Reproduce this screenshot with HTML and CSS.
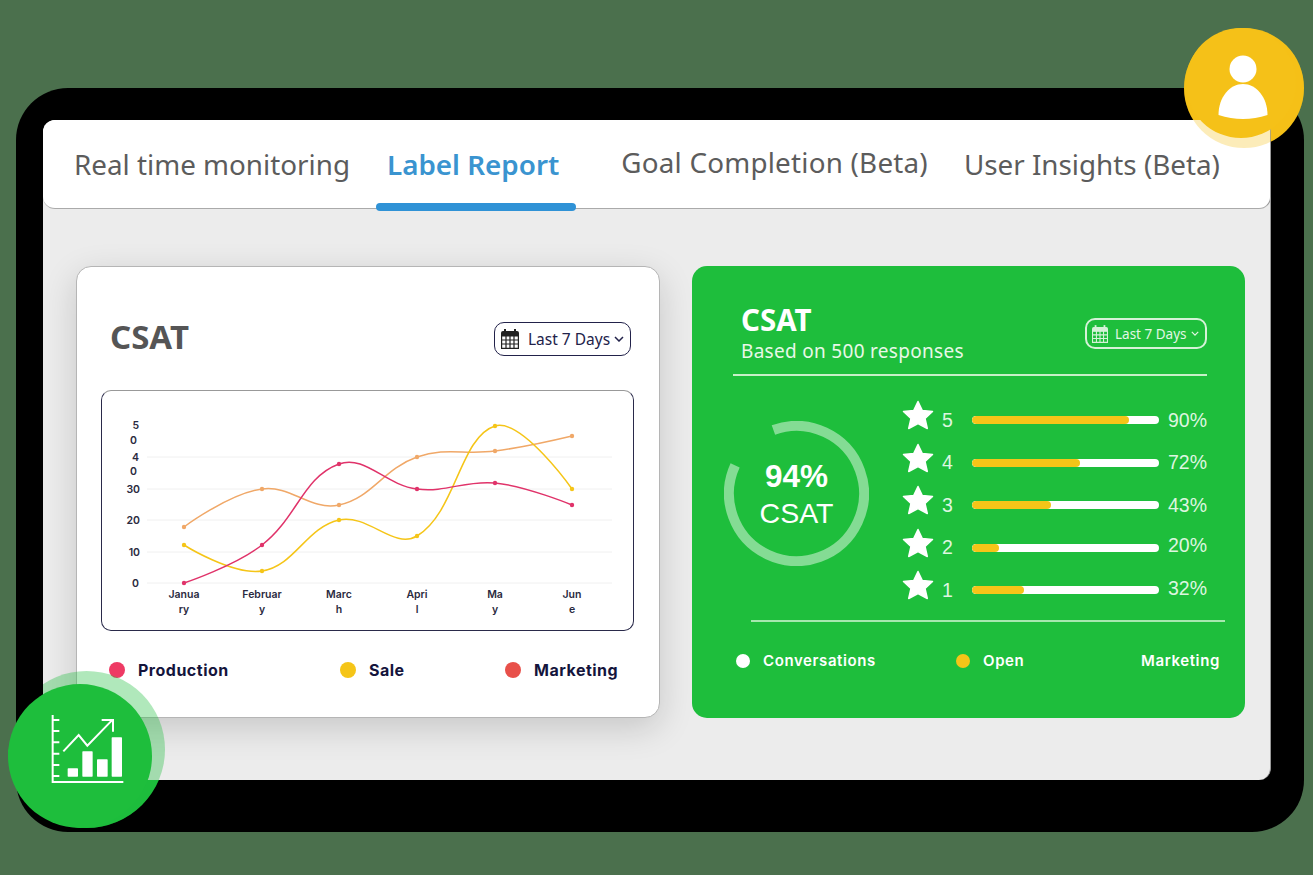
FILE: index.html
```html
<!DOCTYPE html>
<html lang="en">
<head>
    <meta charset="UTF-8">
    <meta name="viewport" content="width=device-width, initial-scale=1.0">
    <title>Label Report</title>
    <link rel="stylesheet" href="styles.css">
</head>
<body>
    <svg class="icon-defs" width="0" height="0">
        <symbol id="calendar" viewBox="0 0 18 20">
            <rect x="3" y="0" width="2" height="4" fill="currentColor"/>
            <rect x="13" y="0" width="2" height="4" fill="currentColor"/>
            <path d="M2 2h14a2 2 0 0 1 2 2v3H0V4a2 2 0 0 1 2-2z" fill="currentColor"/>
            <path d="M.6 7h16.8v12.4H.6zM.6 11h16.8M.6 15h16.8M5 7v12.4M9 7v12.4M13 7v12.4" fill="none" stroke="currentColor" stroke-width="1.2"/>
        </symbol>
        <symbol id="star" viewBox="0 0 32 30">
            <polygon points="16,1.5 20.3,10.5 30.5,11.5 23,18.5 25.3,28.5 16,23.6 6.7,28.5 9,18.5 1.5,11.5 11.7,10.5" fill="#fff" stroke="#fff" stroke-width="1.5" stroke-linejoin="round"/>
        </symbol>
    </svg>

    <div class="stage">
        <div class="badge-back badge-back-yellow"></div>
        <div class="badge-back badge-back-green"></div>

        <div class="backdrop">
            <main class="window">
                <nav class="tabs">
                    <a class="tab tab-real">Real time monitoring</a>
                    <a class="tab tab-label active">Label Report</a>
                    <a class="tab tab-goal">Goal Completion (Beta)</a>
                    <a class="tab tab-user">User Insights (Beta)</a>
                </nav>

                <div class="panels">
                    <section class="card card-chart">
                        <header class="chart-head">
                            <h2>CSAT</h2>
                            <button class="date-btn" type="button">
                                <svg class="cal"><use href="#calendar"/></svg>
                                <span>Last 7 Days</span>
                                <svg class="chev" viewBox="0 0 10 6"><path d="M1 1l4 4 4-4"/></svg>
                            </button>
                        </header>

                        <div class="chart-box">
                            <svg class="chart" viewBox="101 390 533 241">
                                <g class="grid-lines">
                                    <line x1="147" x2="612" y1="457" y2="457"/>
                                    <line x1="147" x2="612" y1="489" y2="489"/>
                                    <line x1="147" x2="612" y1="520" y2="520"/>
                                    <line x1="147" x2="612" y1="552" y2="552"/>
                                    <line x1="147" x2="612" y1="583" y2="583"/>
                                </g>
                                <g class="axis-y">
                                    <text x="139" y="429">5</text>
                                    <text x="137" y="444">0</text>
                                    <text x="139" y="461">4</text>
                                    <text x="137" y="475">0</text>
                                    <text x="140" y="493">30</text>
                                    <text x="140" y="524">20</text>
                                    <text x="140" y="556">10</text>
                                    <text x="139" y="587">0</text>
                                </g>
                                <g class="axis-x">
                                    <text x="184" y="598">Janua</text><text x="184" y="613">ry</text>
                                    <text x="262" y="598">Februar</text><text x="262" y="613">y</text>
                                    <text x="339" y="598">Marc</text><text x="339" y="613">h</text>
                                    <text x="417" y="598">Apri</text><text x="417" y="613">l</text>
                                    <text x="495" y="598">Ma</text><text x="495" y="613">y</text>
                                    <text x="572" y="598">Jun</text><text x="572" y="613">e</text>
                                </g>
                                <path class="line line-orange" d="M184 527C184 527 229 493.6 262 489C291 484.8 310 511 339 505C372 498 383 469 417 457C446 447 464 455 495 451C526 447 572 436 572 436"/>
                                <path class="line line-yellow" d="M184 545C184 545 233 575.7 262 571C295 565.7 306 527.5 339 520C368 513.5 394 550 417 536C456 512.5 460 436.7 495 426C522 418 572 489 572 489"/>
                                <path class="line line-pink" d="M184 583C184 583 235 566 262 545C297 518 303 477 339 464C365 454.5 385 485 417 489C447 492.7 465 480 495 483C526 486 572 505 572 505"/>
                                <g class="pts-orange">
                                    <circle cx="184" cy="527" r="2.2"/><circle cx="262" cy="489" r="2.2"/><circle cx="339" cy="505" r="2.2"/>
                                    <circle cx="417" cy="457" r="2.2"/><circle cx="495" cy="451" r="2.2"/><circle cx="572" cy="436" r="2.2"/>
                                </g>
                                <g class="pts-yellow">
                                    <circle cx="184" cy="545" r="2.2"/><circle cx="262" cy="571" r="2.2"/><circle cx="339" cy="520" r="2.2"/>
                                    <circle cx="417" cy="536" r="2.2"/><circle cx="495" cy="426" r="2.2"/><circle cx="572" cy="489" r="2.2"/>
                                </g>
                                <g class="pts-pink">
                                    <circle cx="184" cy="583" r="2.2"/><circle cx="262" cy="545" r="2.2"/><circle cx="339" cy="464" r="2.2"/>
                                    <circle cx="417" cy="489" r="2.2"/><circle cx="495" cy="483" r="2.2"/><circle cx="572" cy="505" r="2.2"/>
                                </g>
                            </svg>
                        </div>

                        <ul class="legend legend-dark">
                            <li><i class="dot dot-pink"></i>Production</li>
                            <li><i class="dot dot-yellow"></i>Sale</li>
                            <li><i class="dot dot-red"></i>Marketing</li>
                        </ul>
                    </section>

                    <section class="card card-green">
                        <header class="green-head">
                            <div>
                                <h2>CSAT</h2>
                                <p>Based on 500 responses</p>
                            </div>
                            <button class="date-btn date-btn-light" type="button">
                                <svg class="cal"><use href="#calendar"/></svg>
                                <span>Last 7 Days</span>
                                <svg class="chev" viewBox="0 0 10 6"><path d="M1 1l4 4 4-4"/></svg>
                            </button>
                        </header>

                        <div class="green-body">
                            <div class="ring">
                                <svg viewBox="0 0 145 145">
                                    <circle cx="72.5" cy="72.5" r="67.5" transform="rotate(250 72.5 72.5)"/>
                                </svg>
                                <div class="ring-text">
                                    <strong>94%</strong>
                                    <span>CSAT</span>
                                </div>
                            </div>

                            <div class="ratings">
                                <div class="rating">
                                    <svg class="star"><use href="#star"/></svg>
                                    <span class="num">5</span>
                                    <div class="bar"><div class="fill" style="width: 84%"></div></div>
                                    <span class="pct">90%</span>
                                </div>
                                <div class="rating">
                                    <svg class="star"><use href="#star"/></svg>
                                    <span class="num">4</span>
                                    <div class="bar"><div class="fill" style="width: 57.6%"></div></div>
                                    <span class="pct">72%</span>
                                </div>
                                <div class="rating">
                                    <svg class="star"><use href="#star"/></svg>
                                    <span class="num">3</span>
                                    <div class="bar"><div class="fill" style="width: 42%"></div></div>
                                    <span class="pct">43%</span>
                                </div>
                                <div class="rating">
                                    <svg class="star"><use href="#star"/></svg>
                                    <span class="num">2</span>
                                    <div class="bar"><div class="fill" style="width: 14.6%"></div></div>
                                    <span class="pct pct-up">20%</span>
                                </div>
                                <div class="rating">
                                    <svg class="star"><use href="#star"/></svg>
                                    <span class="num">1</span>
                                    <div class="bar"><div class="fill" style="width: 28%"></div></div>
                                    <span class="pct pct-up">32%</span>
                                </div>
                            </div>
                        </div>

                        <ul class="legend legend-light">
                            <li><i class="dot dot-white"></i>Conversations</li>
                            <li><i class="dot dot-yellow"></i>Open</li>
                            <li>Marketing</li>
                        </ul>
                    </section>
                </div>
            </main>
        </div>

        <div class="badge-halo badge-halo-yellow"></div>
        <div class="badge-core badge-core-yellow">
            <svg viewBox="0 0 110 110">
                <circle cx="57" cy="41" r="13.5" fill="#fff"/>
                <path d="M32.5 87C32.5 69 44 56 57 56S81.5 69 81.5 87Q57 95 32.5 87z" fill="#fff"/>
            </svg>
        </div>

        <div class="badge-halo badge-halo-green"></div>
        <div class="badge-core badge-core-green">
            <svg viewBox="24 72 432 432">
                <g fill="none" stroke="#fff" stroke-width="6">
                    <path d="M158 165V366H370"/>
                    <path d="M158 180h20M158 213h20M158 247h20M158 281h20M158 315h20M158 348h20"/>
                    <path d="M190 274L236 225L262 257L335 182"/>
                    <path d="M305 180H339V215"/>
                </g>
                <g fill="#fff">
                    <rect x="203" y="325" width="31" height="25" rx="2"/>
                    <rect x="247" y="274" width="31" height="76" rx="2"/>
                    <rect x="291" y="298" width="32" height="52" rx="2"/>
                    <rect x="335" y="232" width="31" height="118" rx="2"/>
                </g>
            </svg>
        </div>
    </div>
</body>
</html>
```

FILE: styles.css
```css
body{
    margin: 0;
    background-color: #4b704d;
    font-family: "Noto Sans", "Open Sans", sans-serif;
}
.icon-defs{
    display: block;
    height: 0;
}
.stage{
    position: relative;
    width: 1313px;
    height: 875px;
    padding-top: 88px;
    box-sizing: border-box;
    overflow: hidden;
}
.backdrop{
    margin-left: 16px;
    width: 1288px;
    height: 744px;
    box-sizing: border-box;
    padding: 32px 33px 52px 27px;
    background-color: #000;
    border-radius: 52px;
}
.window{
    position: relative;
    z-index: 2;
    height: 660px;
    box-sizing: border-box;
    background-color: #ececec;
    border-radius: 12px;
    border-right: 1px solid #999;
}

/* tabs */
.tabs{
    display: flex;
    align-items: center;
    height: 88px;
    background-color: #fff;
    border-radius: 12px;
    border-bottom: 1px solid #aaa;
    border-right: 1px solid #999;
    margin-right: -1px;
    font-size: 27.8px;
    color: #5c5c5c;
}
.tab{
    white-space: nowrap;
    position: relative;
}
.tab-real{
    margin-left: 31px;
}
.tab-label{
    margin-left: 37px;
}
.tab-goal{
    margin-left: 62px;
    margin-top: -4px;
    letter-spacing: .22px;
}
.tab-user{
    margin-left: 36px;
}
.active{
    color: #3a94d0;
    font-weight: 600;
}
.active::after{
    content: "";
    position: absolute;
    left: -11px;
    width: 200px;
    top: 58px;
    height: 8px;
    background-color: #2f92d6;
    border-radius: 4px;
}

/* cards */
.panels{
    display: grid;
    grid-template-columns: 584px 553px;
    column-gap: 32px;
    padding: 57px 0 0 33px;
}
.card{
    height: 452px;
    box-sizing: border-box;
    border-radius: 15px;
}
.card-chart{
    background-color: #fff;
    border: 1px solid #b5b5b5;
    box-shadow: 0 10px 34px rgba(0,0,0,.16);
}
.card-green{
    background-color: #1ebe3c;
    color: #fff;
}
h2{
    margin: 0;
    font-weight: 700;
}
.chart-head{
    display: flex;
    justify-content: space-between;
    align-items: center;
    height: 34px;
    margin: 55px 28px 0 33px;
}
.chart-head h2{
    font-size: 33px;
    color: #555;
    margin-top: -6px;
}
.date-btn{
    display: flex;
    align-items: center;
    width: 137px;
    height: 34px;
    box-sizing: border-box;
    padding: 0 0 0 6px;
    background: none;
    border: 1px solid #22224a;
    border-radius: 10px;
    font-family: inherit;
    font-size: 15.5px;
    color: #22224a;
    white-space: nowrap;
}
.cal{
    width: 18px;
    height: 20px;
    color: #222;
    margin-right: 9px;
    flex: none;
}
.chev{
    width: 10px;
    height: 6px;
    margin-left: 4px;
    fill: none;
    stroke: currentColor;
    stroke-width: 1.5;
}
.date-btn-light{
    width: 122px;
    height: 31px;
    border: 2px solid #d5f2d8;
    font-size: 13.5px;
    color: #e2f7e4;
    padding-left: 5px;
}
.date-btn-light .cal{
    width: 16px;
    height: 18px;
    color: #d5f2d8;
    margin-right: 7px;
}
.date-btn-light .chev{
    width: 8px;
    height: 5px;
}
.chart-box{
    margin: 34px 25px 0 24px;
    height: 241px;
    box-sizing: border-box;
    border: 1px solid #2a2a4a;
    border-top-color: #999;
    border-radius: 10px;
    overflow: hidden;
}
.chart{
    display: block;
    width: 533px;
    height: 241px;
    margin: -1px;
}
.grid-lines line{
    stroke: #f0f0f0;
    stroke-width: 1;
}
.chart text{
    font-family: "Inter", "Noto Sans", sans-serif;
    font-size: 10.5px;
    font-weight: 600;
    fill: #2a2a40;
}
.axis-y text{
    text-anchor: end;
}
.axis-x text{
    text-anchor: middle;
}
.line{
    fill: none;
    stroke-width: 1.5;
}
.line-orange{
    stroke: #f0a868;
}
.line-yellow{
    stroke: #f5c518;
}
.line-pink{
    stroke: #e0336a;
}
.pts-orange{
    fill: #f0a868;
}
.pts-yellow{
    fill: #f5c518;
}
.pts-pink{
    fill: #e0336a;
}

/* legends */
.legend{
    display: grid;
    margin: 0;
    padding: 0;
    list-style: none;
    font-family: "Inter", "Noto Sans", sans-serif;
    font-weight: 700;
}
.legend li{
    display: flex;
    align-items: center;
}
.legend-dark{
    grid-template-columns: 231px 165px auto;
    margin: 29px 0 0 32px;
    font-size: 16px;
    letter-spacing: .5px;
    color: #14143c;
}
.legend-dark .dot{
    width: 16px;
    height: 16px;
    margin-right: 13px;
}
.legend-light{
    grid-template-columns: 220px 185px auto;
    margin: 30px 0 0 44px;
    font-size: 15px;
    letter-spacing: .6px;
    font-weight: 600;
}
.legend-light .dot{
    width: 14px;
    height: 14px;
    margin-right: 13px;
}
.dot{
    display: block;
    border-radius: 50%;
    flex: none;
}
.dot-pink{
    background-color: #ee3a64;
}
.dot-yellow{
    background-color: #f5c518;
}
.dot-red{
    background-color: #e8504a;
}
.dot-white{
    background-color: #fff;
}

/* green card */
.green-head{
    display: flex;
    justify-content: space-between;
    align-items: flex-start;
    height: 72px;
    margin: 0 38px 0 41px;
    padding: 36px 0 0 8px;
    box-sizing: content-box;
    border-bottom: 2px solid #c8f0c8;
}
.green-head h2{
    font-size: 29.5px;
    line-height: 36px;
}
.green-head p{
    margin: 0;
    font-size: 19px;
    letter-spacing: .3px;
    line-height: 26px;
    color: #e8f8e8;
}
.green-head .date-btn{
    margin-top: 16px;
}
.green-body{
    display: flex;
    height: 212px;
    margin-left: 32px;
    margin-top: 23px;
}
.ring{
    position: relative;
    width: 145px;
    height: 145px;
    margin: 22px 33px 0 0;
    flex: none;
}
.ring svg{
    display: block;
    width: 145px;
    height: 145px;
}
.ring circle{
    fill: none;
    stroke: #84dc94;
    stroke-width: 10;
    stroke-dasharray: 370 54;
}
.ring-text{
    position: absolute;
    inset: 0;
    padding-top: 3px;
    display: flex;
    flex-direction: column;
    align-items: center;
    justify-content: center;
    font-family: "Liberation Sans", Arial, sans-serif;
}
.ring-text strong{
    font-size: 31.5px;
    line-height: 37px;
}
.ring-text span{
    font-size: 28.5px;
    line-height: 37px;
}
.ratings{
    display: grid;
    grid-auto-rows: 42.5px;
    width: 306px;
}
.rating{
    display: flex;
    align-items: center;
    font-family: "Liberation Sans", Arial, sans-serif;
    font-size: 19.5px;
    color: #def6e0;
}
.star{
    width: 32px;
    height: 30px;
    margin-bottom: 10px;
    flex: none;
}
.num{
    width: 30px;
    margin-left: 8px;
}
.bar{
    width: 187px;
    height: 8px;
    background-color: #fff;
    border-radius: 4px;
    overflow: hidden;
    flex: none;
}
.fill{
    height: 100%;
    background-color: #f5c518;
    border-radius: 4px;
}
.pct{
    margin-left: 9px;
}
.pct-up{
    margin-bottom: 4px;
}
.green-body + .legend{
    margin-top: 9px;
    padding-top: 31px;
    position: relative;
}
.green-body + .legend::before{
    content: "";
    position: absolute;
    top: 0;
    left: 15px;
    width: 474px;
    height: 2px;
    background-color: #a6e8ae;
}

/* badges over the window */
.badge-back,
.badge-halo,
.badge-core{
    position: absolute;
    border-radius: 50%;
}
.badge-back{
    z-index: 1;
}
.badge-halo,
.badge-core{
    z-index: 3;
}
.badge-back-yellow,
.badge-halo-yellow{
    left: 1184px;
    top: 28px;
    width: 120px;
    height: 120px;
}
.badge-back-yellow{
    background-color: #f5c118;
}
.badge-halo-yellow{
    background-color: rgba(245,193,24,.3);
}
.badge-core-yellow{
    left: 1186px;
    top: 28px;
    width: 110px;
    height: 110px;
    background-color: #f5c118;
}
.badge-back-green,
.badge-halo-green{
    left: 8px;
    top: 671px;
    width: 157px;
    height: 157px;
}
.badge-back-green{
    background-color: #1ebe3c;
    clip-path: inset(50% 0 0 0);
}
.badge-halo-green{
    background-color: rgba(30,190,60,.35);
    clip-path: inset(0 0 0 35px);
}
.badge-core-green{
    left: 8px;
    top: 684px;
    width: 144px;
    height: 144px;
    background-color: #1ebe3c;
}
.badge-core svg{
    display: block;
    width: 100%;
    height: 100%;
}
```
